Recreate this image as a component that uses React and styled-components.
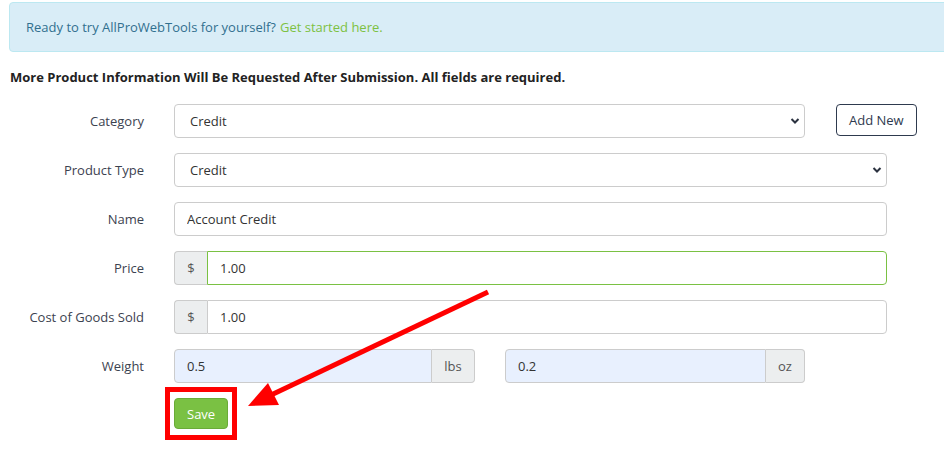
import React from "react";
import styled, { createGlobalStyle, css } from "styled-components";

const Global = createGlobalStyle`
  html, body { margin: 0; padding: 0; background: #fff; overflow: hidden; }
  body { font-family: "Open Sans", "Liberation Sans", sans-serif; font-size: 13px; color: #333; }
  * { box-sizing: border-box; }
`;

const Page = styled.div`
  position: relative;
  width: 944px;
  height: 454px;
  padding: 2px 0 0 9px;
`;

const Alert = styled.div`
  width: 960px;
  height: 50px;
  display: flex;
  align-items: center;
  padding: 0 16px;
  background: #d9edf7;
  border: 1px solid #bce8f1;
  border-radius: 4px;
  color: #31708f;
  font-size: 13px;
`;

const AlertLink = styled.a`
  color: #7dc142;
  text-decoration: none;
  margin-left: 4px;
`;

const Heading = styled.h4`
  margin: 16px 0 18px 1px;
  font-size: 13px;
  line-height: 18px;
  font-weight: 700;
  color: #222;
`;

const Form = styled.form`
  display: flex;
  flex-direction: column;
  gap: 15px;
`;

const Row = styled.div`
  display: grid;
  grid-template-columns: 135px 713px;
  column-gap: 30px;
  align-items: center;
  min-height: 34px;
`;

const Label = styled.label`
  text-align: right;
  color: #3c4250;
  font-size: 13px;
`;

const Field = styled.div`
  display: flex;
  align-items: center;
  gap: ${(p) => p.$gap || 0}px;
`;

const inputBase = css`
  height: 34px;
  border: 1px solid #ccc;
  border-radius: 4px;
  font-family: inherit;
  font-size: 13px;
  color: #333;
  background: #fff;
  outline: none;
`;

const SelectWrap = styled.div`
  position: relative;
  flex: none;
  width: ${(p) => p.$width}px;
`;

const Select = styled.select`
  ${inputBase};
  width: 100%;
  padding: 0 20px 0 15px;
  appearance: none;
  -webkit-appearance: none;
`;

const Chevron = styled.svg`
  position: absolute;
  right: 5px;
  top: 13px;
  pointer-events: none;
`;

const TextInput = styled.input`
  ${inputBase};
  width: 100%;
  padding: 0 12px;
`;

const Group = styled.div`
  display: flex;
  flex: none;
  width: ${(p) => (p.$width ? `${p.$width}px` : "100%")};
  height: 34px;
`;

const Addon = styled.span`
  display: flex;
  align-items: center;
  justify-content: center;
  width: ${(p) => p.$width}px;
  flex: none;
  background: #eceeef;
  border: 1px solid #ccc;
  color: #555;
  font-size: 13px;
  ${(p) =>
    p.$side === "left"
      ? css`border-radius: 4px 0 0 4px; border-right: none;`
      : css`border-radius: 0 4px 4px 0; border-left: none;`}
`;

const GroupInput = styled.input`
  ${inputBase};
  flex: 1;
  min-width: 0;
  padding: 0 12px;
  border-color: ${(p) => (p.$focus ? "#7ac143" : "#ccc")};
  background: ${(p) => (p.$filled ? "#e8f0fe" : "#fff")};
  ${(p) =>
    p.$side === "left"
      ? css`border-radius: 0 4px 4px 0;`
      : css`border-radius: 4px 0 0 4px;`}
`;

const OutlineButton = styled.button`
  flex: none;
  white-space: nowrap;
  margin-left: 31px;
  height: 32px;
  margin-top: -2px;
  padding: 0 12px;
  border: 1px solid #2e3a4e;
  border-radius: 4px;
  background: #fff;
  color: #2e3a4e;
  font-family: inherit;
  font-size: 13px;
`;

const SaveRow = styled.div`
  display: flex;
  padding-left: 165px;
`;

const Highlight = styled.span`
  position: relative;
  display: inline-flex;
  &::before {
    content: "";
    position: absolute;
    left: -9px;
    right: -9px;
    top: -11px;
    bottom: -11px;
    border: 5px solid #ff0000;
    pointer-events: none;
  }
`;

const SaveButton = styled.button`
  height: 31px;
  padding: 0 12px;
  border: 1px solid #6aab38;
  border-radius: 4px;
  background: #7ac143;
  color: #fff;
  font-family: inherit;
  font-size: 13px;
`;

const Arrow = styled.svg`
  position: absolute;
  left: 0;
  top: 0;
  pointer-events: none;
`;

const ChevronIcon = () => (
  <Chevron width="10" height="8" viewBox="0 0 10 8">
    <path d="M1.5 2 L5 5.5 L8.5 2" fill="none" stroke="#2b3240" strokeWidth="2" />
  </Chevron>
);

export default function App() {
  return (
    <>
      <Global />
      <Page>
        <Alert>
          Ready to try AllProWebTools for yourself?
          <AlertLink href="#">Get started here.</AlertLink>
        </Alert>
        <Heading>
          More Product Information Will Be Requested After Submission. All fields are required.
        </Heading>
        <Form onSubmit={(e) => e.preventDefault()}>
          <Row>
            <Label>Category</Label>
            <Field>
              <SelectWrap $width={631}>
                <Select defaultValue="Credit">
                  <option>Credit</option>
                </Select>
                <ChevronIcon />
              </SelectWrap>
              <OutlineButton type="button">Add New</OutlineButton>
            </Field>
          </Row>
          <Row>
            <Label>Product Type</Label>
            <Field>
              <SelectWrap $width={713}>
                <Select defaultValue="Credit">
                  <option>Credit</option>
                </Select>
                <ChevronIcon />
              </SelectWrap>
            </Field>
          </Row>
          <Row>
            <Label>Name</Label>
            <Field>
              <TextInput defaultValue="Account Credit" />
            </Field>
          </Row>
          <Row>
            <Label>Price</Label>
            <Field>
              <Group>
                <Addon $side="left" $width={33}>$</Addon>
                <GroupInput $side="left" $focus defaultValue="1.00" />
              </Group>
            </Field>
          </Row>
          <Row>
            <Label>Cost of Goods Sold</Label>
            <Field>
              <Group>
                <Addon $side="left" $width={33}>$</Addon>
                <GroupInput $side="left" defaultValue="1.00" />
              </Group>
            </Field>
          </Row>
          <Row>
            <Label>Weight</Label>
            <Field $gap={30}>
              <Group $width={301}>
                <GroupInput $side="right" $filled defaultValue="0.5" />
                <Addon $side="right" $width={43}>lbs</Addon>
              </Group>
              <Group $width={300}>
                <GroupInput $side="right" $filled defaultValue="0.2" />
                <Addon $side="right" $width={39}>oz</Addon>
              </Group>
            </Field>
          </Row>
          <SaveRow>
            <Highlight>
              <SaveButton type="submit">Save</SaveButton>
            </Highlight>
          </SaveRow>
        </Form>
        <Arrow width="944" height="454" viewBox="0 0 944 454">
          <line x1="488" y1="292" x2="270" y2="395.5" stroke="#ff0000" strokeWidth="5" />
          <polygon points="248,406 268,383 279,405" fill="#ff0000" />
        </Arrow>
      </Page>
    </>
  );
}
